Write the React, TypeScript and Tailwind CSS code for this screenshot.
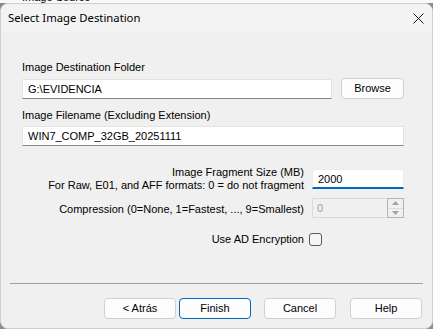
import { useState } from 'react'

const body = { fontFamily: '"Liberation Sans", Arial, sans-serif' }
const title = { fontFamily: '"Noto Sans", "Segoe UI", sans-serif' }

function Btn(props: { label: string; primary?: boolean; className?: string }) {
  return (
    <button
      style={body}
      className={
        'h-[21px] shrink-0 rounded-[4px] bg-[#fdfdfd] text-[11px] leading-none text-black ' +
        (props.primary ? 'border border-[#0067c0] ' : 'border border-[#d0d0d0] ') +
        (props.className || 'w-[72px]')
      }
    >
      {props.label}
    </button>
  )
}

export default function App() {
  const [folder, setFolder] = useState('G:\\EVIDENCIA')
  const [name, setName] = useState('WIN7_COMP_32GB_20251111')
  const [frag, setFrag] = useState('2000')
  const [enc, setEnc] = useState(false)

  return (
    <div className="flex h-[329px] w-[433px] flex-col overflow-hidden bg-[#8c8c8c]" style={body}>
      {/* parent window peeking above */}
      <div className="h-[3px] shrink-0 overflow-hidden bg-[#f9f9f9] pl-[4px] pr-[20px]">
        <div className="h-[10px] border-x border-[#c4c4c4]">
          <div className="-mt-[11px] pl-[17px] text-[11px] leading-[16px] text-black">Image Source</div>
        </div>
      </div>

      <div className="flex flex-1 flex-col overflow-hidden rounded-[8px] border border-[#cfcfcf] bg-[#f0f0f0]">
        {/* title bar */}
        <div className="flex h-[28px] shrink-0 items-center justify-between bg-[#f3f3f3] pl-[7px] pr-[8px]">
          <span style={title} className="text-[11.3px] leading-none text-black">
            Select Image Destination
          </span>
          <svg width="11" height="11" viewBox="0 0 11 11">
            <path d="M0.5 0.5L10.5 10.5M10.5 0.5L0.5 10.5" stroke="#1a1a1a" strokeWidth="1" />
          </svg>
        </div>

        {/* body */}
        <div className="flex flex-col pl-[21px] pr-[28px] pt-[27px] text-[11px] leading-[16px] text-black">
          <div>Image Destination Folder</div>
          <div className="mt-[3px] flex items-center">
            <input
              value={folder}
              onChange={(e) => setFolder(e.target.value)}
              style={body}
              className="h-[20px] w-[310px] shrink-0 border border-[#e3e3e3] border-b-[#868686] bg-white px-[5px] text-[11px] text-black outline-none"
            />
            <Btn label="Browse" className="ml-[9px] w-[63px]" />
          </div>

          <div className="mt-[8px]">Image Filename (Excluding Extension)</div>
          <input
            value={name}
            onChange={(e) => setName(e.target.value)}
            style={body}
            className="mt-[3px] h-[20px] w-full border border-[#e3e3e3] border-b-[#868686] bg-white px-[5px] text-[11px] text-black outline-none"
          />

          <div className="mt-[20px] flex items-center">
            <div className="flex-1 whitespace-nowrap text-right leading-[13px]">
              <div>Image Fragment Size (MB)</div>
              <div>For Raw, E01, and AFF formats: 0 = do not fragment</div>
            </div>
            <input
              value={frag}
              onChange={(e) => setFrag(e.target.value)}
              style={body}
              className="ml-[8px] h-[20px] w-[92px] border border-[#ececec] border-b-2 border-b-[#0067c0] bg-white px-[5px] text-[11px] text-black outline-none"
            />
          </div>

          <div className="mt-[6px] flex items-center">
            <div className="flex-1 whitespace-nowrap pt-[2px] text-right">
              Compression (0=None, 1=Fastest, ..., 9=Smallest)
            </div>
            <div className="ml-[8px] flex h-[20px] w-[92px] border border-[#d9d9d9] bg-[#f0f0f0]">
              <div className="flex-1 pl-[4px] leading-[18px] text-[#a0a0a0]">0</div>
              <div className="-my-[1px] -mr-[1px] flex w-[17px] flex-col border border-[#b4b4b4]">
                <div className="flex flex-1 items-center justify-center border-b border-[#dcdcdc]">
                  <svg width="7" height="4" viewBox="0 0 7 4">
                    <path d="M0 4L3.5 0L7 4Z" fill="#a3a3a3" />
                  </svg>
                </div>
                <div className="flex flex-1 items-center justify-center">
                  <svg width="7" height="4" viewBox="0 0 7 4">
                    <path d="M0 0L3.5 4L7 0Z" fill="#a3a3a3" />
                  </svg>
                </div>
              </div>
            </div>
          </div>

          <div className="mt-[13px] flex items-center">
            <div className="flex-1 whitespace-nowrap text-right">Use AD Encryption</div>
            <div className="ml-[5px] w-[95px]">
              <button
                onClick={() => setEnc(!enc)}
                className="block h-[13px] w-[13px] rounded-[3px] border border-[#5a5a5a] bg-[#f5f5f5]"
              />
            </div>
          </div>
        </div>

        <div className="mx-[9px] mt-[36px] h-px bg-[#a0a0a0]" />

        <div className="mt-[14px] flex">
          <Btn label="< Atrás" className="ml-[103px] w-[72px]" />
          <Btn label="Finish" primary className="ml-[3px] w-[72px]" />
          <Btn label="Cancel" className="ml-[13px] w-[72px]" />
          <Btn label="Help" className="ml-[14px] w-[72px]" />
        </div>
      </div>
    </div>
  )
}
